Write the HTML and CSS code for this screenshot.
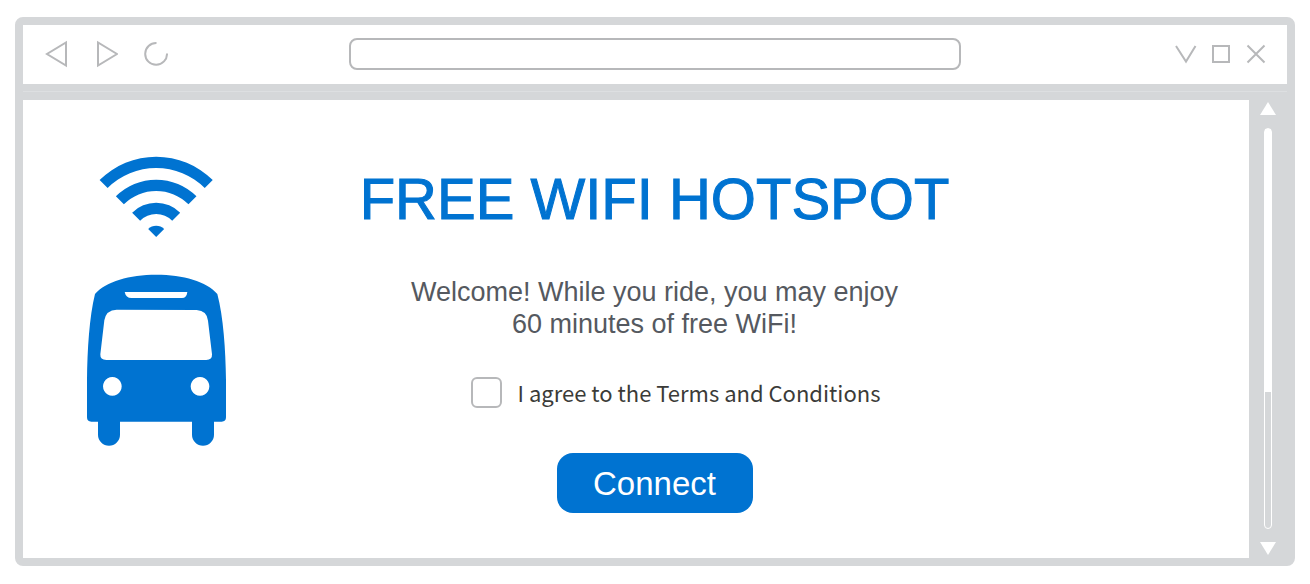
FILE: index.html
```html
<!DOCTYPE html>
<html lang="en">
<head>
    <meta charset="UTF-8">
    <meta name="viewport" content="width=device-width, initial-scale=1.0">
    <title>Free WiFi Hotspot</title>
    <link rel="stylesheet" href="styles.css">
</head>
<body>
    <div class="browser">
        <header class="toolbar">
            <div class="nav-buttons">
                <button type="button" class="icon-button" aria-label="Back">
                    <svg width="24" height="28" viewBox="0 0 24 28"><path d="M22 2.500v23L3 14z"/></svg>
                </button>
                <button type="button" class="icon-button" aria-label="Forward">
                    <svg width="24" height="28" viewBox="0 0 24 28"><path d="M4 2.500v23L23 14z"/></svg>
                </button>
                <button type="button" class="icon-button" aria-label="Reload">
                    <svg width="24" height="28" viewBox="0 0 24 28"><path d="M12.500 3A10.900 10.900 0 1 0 23 13.500"/></svg>
                </button>
            </div>
            <input type="text" class="address" aria-label="Address">
            <div class="window-buttons">
                <button type="button" class="icon-button" aria-label="Minimize">
                    <svg width="22" height="22" viewBox="0 0 22 22"><path d="M1 3l10 15.500L20.500 3"/></svg>
                </button>
                <button type="button" class="icon-button" aria-label="Maximize">
                    <svg width="22" height="22" viewBox="0 0 22 22"><path d="M3 3h16v16H3z"/></svg>
                </button>
                <button type="button" class="icon-button" aria-label="Close">
                    <svg width="22" height="22" viewBox="0 0 22 22"><path d="M2.500 2.500l17 17M19.500 2.500l-17 17"/></svg>
                </button>
            </div>
        </header>

        <div class="viewport">
            <main class="page">
                <div class="pictures">
                    <svg class="wifi" width="140" height="82" viewBox="48 48 420 246">
                        <path d="M88.800 120.300A240 240 0 0 1 428.200 120.300L404.200 144.300A206 206 0 0 0 112.800 144.300Z"/>
                        <path d="M137.600 169.100A171 171 0 0 1 379.400 169.100L355.400 193.100A137 137 0 0 0 161.600 193.100Z"/>
                        <path d="M186.400 217.900A102 102 0 0 1 330.600 217.900L306.600 241.900A68 68 0 0 0 210.400 241.900Z"/>
                        <path d="M234.500 267A34 34 0 0 1 282.500 267L258.500 291Z"/>
                    </svg>
                    <svg class="bus" width="140" height="172" viewBox="48 402 420 516">
                        <path fill-rule="evenodd" d="M75 462C108 424 178 404 259 404S410 424 442 462C460 530 467 630 468 720V832Q468 845 455 845H432V884A33 33 0 0 1 366 884V845H150V884A33 33 0 0 1 84 884V845H64Q51 845 51 832V720C52 630 58 530 75 462Z
                            M164 456H352Q350 474 336 474H184Q168 474 164 456Z
                            M140 509L380 510Q411 512 414 542L426 643Q427 660 409 660H109Q90 660 91 643L103 541Q108 510 140 509Z
                            M127 711a28 28 0 1 0 .1 0Z
                            M390 711a28 28 0 1 0 .1 0Z"/>
                    </svg>
                </div>
                <form class="hotspot">
                    <h1>FREE WIFI HOTSPOT</h1>
                    <p>Welcome! While you ride, you may enjoy<br>60 minutes of free WiFi!</p>
                    <div class="terms">
                        <input type="checkbox" id="agree">
                        <label for="agree">I agree to the Terms and Conditions</label>
                    </div>
                    <button type="button" class="connect">Connect</button>
                </form>
            </main>
            <div class="scrollbar">
                <svg width="16" height="13" viewBox="0 0 16 13"><path d="M8 0l8 13H0z"/></svg>
                <div class="track">
                    <div class="thumb"></div>
                </div>
                <svg width="16" height="13" viewBox="0 0 16 13"><path d="M0 0h16L8 13z"/></svg>
            </div>
        </div>
    </div>
</body>
</html>
```
FILE: styles.css
```css
* {
    box-sizing: border-box;
}
body {
    margin: 0;
    padding: 17px 15px 18px;
    min-height: 100vh;
    display: flex;
    flex-direction: column;
    background: white;
    font-family: "Liberation Sans", Arial, sans-serif;
    color: #555960;
}
svg {
    display: block;
}
.browser {
    flex: 1;
    display: flex;
    flex-direction: column;
    border: 8px solid #d5d7d9;
    border-radius: 8px;
    background: #d5d7d9;
}

/* Toolbar */
.toolbar {
    display: grid;
    grid-template-columns: 1fr minmax(0, 612px) 1fr;
    align-items: center;
    height: 59px;
    padding: 0 20px 2px;
    background: white;
}
.nav-buttons, .window-buttons {
    display: flex;
    align-items: center;
}
.nav-buttons {
    gap: 26px;
    padding-left: 1px;
}
.window-buttons {
    gap: 13px;
    justify-content: flex-end;
}
.icon-button {
    padding: 0;
    border: none;
    background: none;
    cursor: pointer;
}
.icon-button svg {
    fill: none;
    stroke: #b7b8ba;
    stroke-width: 2;
}
.address {
    width: 100%;
    height: 32px;
    padding: 0 10px;
    border: 2px solid #b7b8ba;
    border-radius: 8px;
    background: white;
    font-size: 16px;
}

/* Page area */
.viewport {
    flex: 1;
    display: flex;
    margin-top: 7px;
    padding-top: 8px;
    border-top: 1px solid #dddfe1;
}
.page {
    flex: 1;
    display: flex;
    padding: 56px 166px 44px 63px;
    background: white;
}
.pictures {
    display: flex;
    flex-direction: column;
    gap: 36px;
    fill: #0073d1;
}
.hotspot {
    flex: 1;
    display: flex;
    flex-direction: column;
    align-items: center;
    padding-top: 11px;
    text-align: center;
}
h1 {
    margin: 0 0 45px;
    font-size: 58px;
    font-weight: normal;
    line-height: 64px;
    color: #0073d1;
    -webkit-text-stroke: 1px #0073d1;
}
p {
    margin: 0 0 37px;
    font-size: 27px;
    line-height: 32px;
}
.terms {
    display: flex;
    align-items: center;
    gap: 16px;
    height: 31px;
    margin-bottom: 45px;
    padding-left: 42px;
    font-family: "Noto Sans CJK SC", "Noto Sans", sans-serif;
    font-size: 22px;
    line-height: 31px;
    color: #3b3b38;
}
.terms input {
    appearance: none;
    width: 31px;
    height: 31px;
    margin: 0;
    border: 2px solid #b7b8ba;
    border-radius: 6px;
    background: white;
}
.terms input:checked {
    background: #0073d1;
}
.connect {
    width: 196px;
    height: 60px;
    padding: 2px 0 0;
    border: none;
    border-radius: 16px;
    background: #0073d1;
    color: white;
    font-family: inherit;
    font-size: 33px;
    cursor: pointer;
}

/* Scrollbar */
.scrollbar {
    display: flex;
    flex-direction: column;
    align-items: center;
    gap: 13px;
    width: 38px;
    padding: 2px 0 3px;
    fill: white;
}
.track {
    flex: 1;
    width: 8px;
    border: 1px solid white;
    border-radius: 4px;
}
.thumb {
    height: 66%;
    background: white;
}
```
